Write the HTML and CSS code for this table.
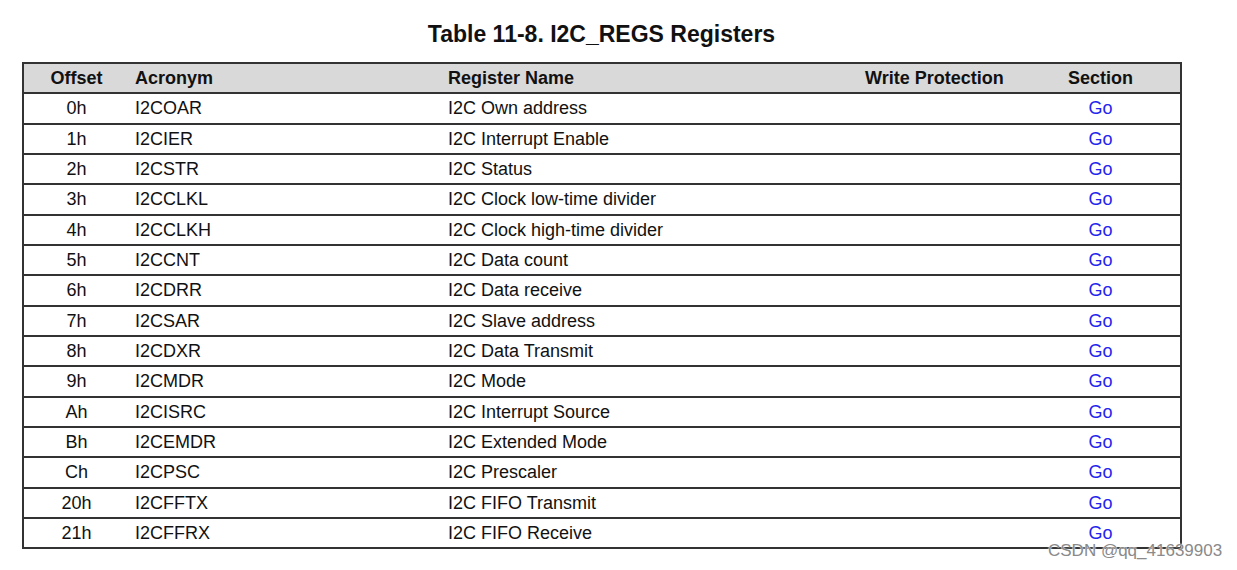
FILE: index.html
```html
<!DOCTYPE html>
<html>
<head>
<meta charset="utf-8">
<link rel="stylesheet" href="styles.css">
</head>
<body>
<div class="page">
  <h1 class="title">Table 11-8. I2C_REGS Registers</h1>
  <table class="regs">
    <colgroup>
      <col class="c-off"><col class="c-acr"><col class="c-name"><col class="c-wp"><col class="c-sec">
    </colgroup>
    <thead>
      <tr><th class="off">Offset</th><th>Acronym</th><th>Register Name</th><th>Write Protection</th><th class="sec">Section</th></tr>
    </thead>
    <tbody>
      <tr><td class="off">0h</td><td>I2COAR</td><td>I2C Own address</td><td></td><td class="sec"><a class="go">Go</a></td></tr>
      <tr><td class="off">1h</td><td>I2CIER</td><td>I2C Interrupt Enable</td><td></td><td class="sec"><a class="go">Go</a></td></tr>
      <tr><td class="off">2h</td><td>I2CSTR</td><td>I2C Status</td><td></td><td class="sec"><a class="go">Go</a></td></tr>
      <tr><td class="off">3h</td><td>I2CCLKL</td><td>I2C Clock low-time divider</td><td></td><td class="sec"><a class="go">Go</a></td></tr>
      <tr><td class="off">4h</td><td>I2CCLKH</td><td>I2C Clock high-time divider</td><td></td><td class="sec"><a class="go">Go</a></td></tr>
      <tr><td class="off">5h</td><td>I2CCNT</td><td>I2C Data count</td><td></td><td class="sec"><a class="go">Go</a></td></tr>
      <tr><td class="off">6h</td><td>I2CDRR</td><td>I2C Data receive</td><td></td><td class="sec"><a class="go">Go</a></td></tr>
      <tr><td class="off">7h</td><td>I2CSAR</td><td>I2C Slave address</td><td></td><td class="sec"><a class="go">Go</a></td></tr>
      <tr><td class="off">8h</td><td>I2CDXR</td><td>I2C Data Transmit</td><td></td><td class="sec"><a class="go">Go</a></td></tr>
      <tr><td class="off">9h</td><td>I2CMDR</td><td>I2C Mode</td><td></td><td class="sec"><a class="go">Go</a></td></tr>
      <tr><td class="off">Ah</td><td>I2CISRC</td><td>I2C Interrupt Source</td><td></td><td class="sec"><a class="go">Go</a></td></tr>
      <tr><td class="off">Bh</td><td>I2CEMDR</td><td>I2C Extended Mode</td><td></td><td class="sec"><a class="go">Go</a></td></tr>
      <tr><td class="off">Ch</td><td>I2CPSC</td><td>I2C Prescaler</td><td></td><td class="sec"><a class="go">Go</a></td></tr>
      <tr><td class="off">20h</td><td>I2CFFTX</td><td>I2C FIFO Transmit</td><td></td><td class="sec"><a class="go">Go</a></td></tr>
      <tr><td class="off">21h</td><td>I2CFFRX</td><td>I2C FIFO Receive</td><td></td><td class="sec"><a class="go">Go</a></td></tr>
    </tbody>
  </table>
  <div class="watermark">CSDN @qq_41639903</div>
</div>
</body>
</html>
```
FILE: styles.css
```css
html, body {
  margin: 0;
  padding: 0;
  background: #ffffff;
}
body {
  font-family: "Liberation Sans", Arial, sans-serif;
  color: #111111;
}
.page {
  position: relative;
  width: 1237px;
  height: 570px;
  padding-top: 21px;
  box-sizing: border-box;
}
.title {
  margin: 0 0 15px 0;
  width: 1203px;
  text-align: center;
  font-size: 23px;
  font-weight: bold;
  line-height: 26px;
  color: #111;
}
.regs {
  margin-left: 22px;
  width: 1158px;
  border-collapse: collapse;
  table-layout: fixed;
  border: 2px solid #333;
  font-size: 18px;
}
.c-off { width: 106px; }
.c-acr { width: 313px; }
.c-name { width: 417px; }
.c-wp { width: 162px; }
.c-sec { width: 160px; }
.regs th, .regs td {
  height: 28.33px;
  padding: 0 0 0 6px;
  text-align: left;
  border-top: 2px solid #333;
  line-height: 20px;
  white-space: nowrap;
}
.regs th {
  background: #d9d9d9;
  font-weight: bold;
}
.regs .off, .regs .sec {
  text-align: center;
  padding-left: 0;
}
.go {
  color: #2424f0;
  text-decoration: none;
}
.watermark {
  position: absolute;
  left: 1048px;
  top: 541px;
  font-size: 17px;
  line-height: 20px;
  color: #8a8a8a;
  text-shadow: 0 0 2px #ffffff, 0 0 1px #ffffff;
}
```
